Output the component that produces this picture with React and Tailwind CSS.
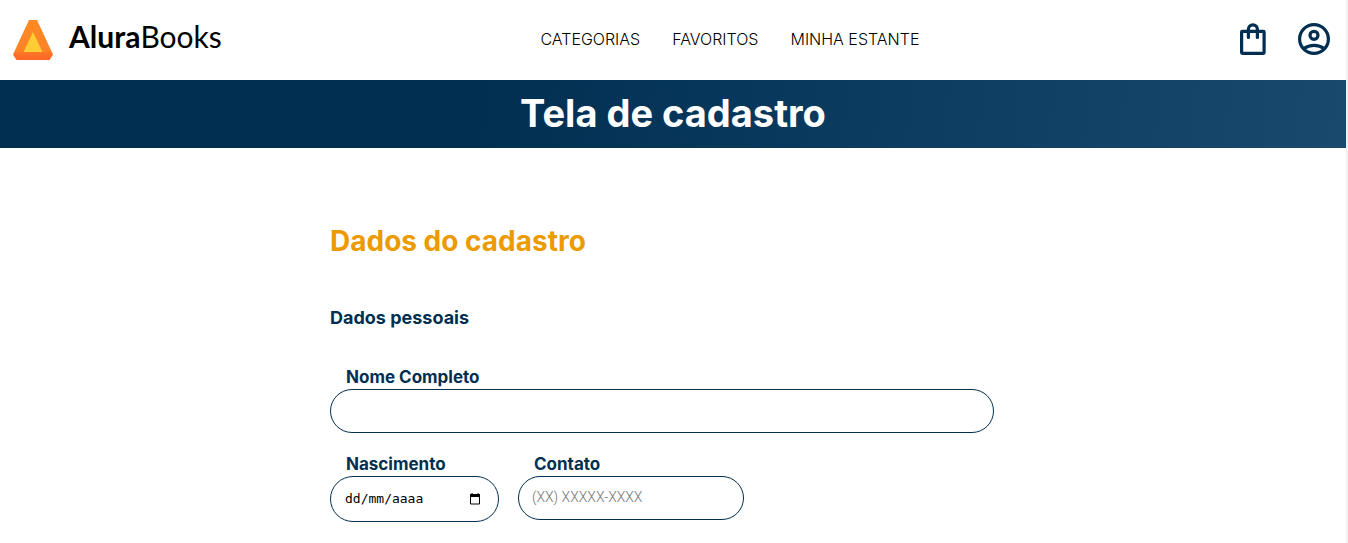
import React from "react";

function Logo() {
  return (
    <a href="#" className="flex items-center gap-4 text-black">
      <svg className="size-10" viewBox="0 0 40 40" aria-hidden="true">
        <defs>
          <linearGradient id="logo-body" x1="0" y1="0" x2="0" y2="1">
            <stop offset="0" stopColor="#ff8a24" />
            <stop offset="0.78" stopColor="#ff8228" />
            <stop offset="0.82" stopColor="#ff7628" />
            <stop offset="1" stopColor="#ff6426" />
          </linearGradient>
        </defs>
        <path d="M16 0h8l16 34.500-3.500 5.500h-33L0 34.500z" fill="url(#logo-body)" />
        <path d="M20 12l9.500 20h-19z" fill="#ffcc33" />
      </svg>
      <span className="pb-2 font-[Lato,sans-serif] text-[30px] leading-10">
        <b className="font-bold">Alura</b>Books
      </span>
    </a>
  );
}

function BagIcon() {
  return (
    <svg className="size-8" viewBox="0 0 32 32" fill="none" stroke="#002f52" strokeWidth="3.2" aria-hidden="true">
      <rect x="3.600" y="8.300" width="22.500" height="22.100" rx="0.800" />
      <path d="M10.400 14.400V6.500a4.500 4.700 0 0 1 9 0v7.900" strokeLinecap="round" />
    </svg>
  );
}

function AccountIcon() {
  return (
    <svg className="size-8" viewBox="0 0 32 32" fill="none" stroke="#002f52" strokeWidth="3.2" aria-hidden="true">
      <circle cx="16" cy="16" r="14.400" />
      <circle cx="16" cy="12.300" r="4" />
      <path d="M5.800 25.600C8.600 23.500 12 22.300 16 22.300s7.400 1.200 10.200 3.300" />
    </svg>
  );
}

function CalendarIcon() {
  return (
    <svg className="h-3 w-3" viewBox="0 0 12 12" aria-hidden="true">
      <path d="M1.500 1.500h9v9.500h-9z" fill="none" stroke="black" />
      <path d="M1 1h10v3H1zM2.500 0h1v1h-1zM8.500 0h1v1h-1z" />
    </svg>
  );
}

function Field({ id, label, className, children }) {
  return (
    <div className={className}>
      <label htmlFor={id} className="block pl-4 text-[17px] leading-6 font-bold">
        {label}
      </label>
      {children}
    </div>
  );
}

export default function App() {
  return (
    <div className="min-h-screen border-r-2 border-[#f1f1f1] bg-white font-[Inter,sans-serif] text-[#002f52]">
      <header className="flex h-20 items-center justify-between pr-4 pl-[13px]">
        <Logo />
        <nav className="flex gap-8 pb-0.5 text-base font-light text-black">
          <a href="#categorias">CATEGORIAS</a>
          <a href="#favoritos">FAVORITOS</a>
          <a href="#estante">MINHA ESTANTE</a>
        </nav>
        <div className="flex gap-7 pb-0.5">
          <button type="button" aria-label="Sacola"><BagIcon /></button>
          <button type="button" aria-label="Minha conta"><AccountIcon /></button>
        </div>
      </header>

      <h1 className="bg-[linear-gradient(97.54deg,#002f52_35%,#326589_165%)] pt-[7px] pb-[9px] text-center text-[38px] leading-[52px] font-bold text-white">
        Tela de cadastro
      </h1>

      <main className="mx-auto w-full max-w-[686px] pt-[73px] pr-[22px]">
        <h2 className="text-[28px] leading-10 font-bold text-[#eb9b00]">Dados do cadastro</h2>
        <form>
          <h3 className="mt-[45px] text-lg leading-6 font-bold">Dados pessoais</h3>
          <Field id="nome" label="Nome Completo" className="mt-[35px]">
            <input
              id="nome"
              type="text"
              className="block h-11 w-full rounded-full border border-[#002f52] px-[14px] text-sm outline-none"
            />
          </Field>
          <div className="mt-[19px] flex gap-[19px]">
            <Field id="nascimento" label="Nascimento" className="w-[169px]">
              <div className="flex h-[46px] items-center rounded-full border border-[#002f52] pr-[17px] pl-[14px]">
                <input
                  id="nascimento"
                  type="text"
                  placeholder="dd/mm/aaaa"
                  className="w-full min-w-0 flex-1 font-['DejaVu_Sans_Mono',monospace] text-[13px] text-black outline-none placeholder:text-black"
                />
                <button type="button" aria-label="Abrir calendário"><CalendarIcon /></button>
              </div>
            </Field>
            <Field id="contato" label="Contato" className="w-[226px]">
              <input
                id="contato"
                type="tel"
                placeholder="(XX) XXXXX-XXXX"
                className="block h-11 w-full rounded-full border border-[#002f52] px-[13px] pb-0.5 font-[Roboto,sans-serif] text-sm font-light outline-none placeholder:text-[#757575]"
              />
            </Field>
          </div>
        </form>
      </main>
    </div>
  );
}
